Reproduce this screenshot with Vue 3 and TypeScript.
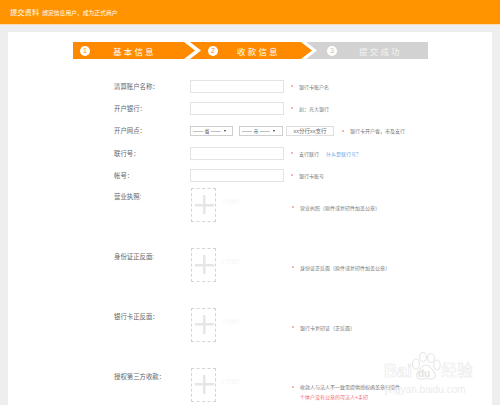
<script setup lang="ts">
interface Step {
  no: number
  label: string
  cls: string
}

interface TextRow {
  label: string
  hint: string
  link?: string
}

interface UploadRow {
  label: string
  hint: string
  extra?: string
}

const steps: Step[] = [
  { no: 1, label: '基本信息', cls: 'first' },
  { no: 2, label: '收款信息', cls: 'second' },
  { no: 3, label: '提交成功', cls: 'third' },
]

const topRows: TextRow[] = [
  { label: '清算账户名称：', hint: '银行卡账户名' },
  { label: '开户银行：', hint: '如：光大银行' },
]

const bottomRows: TextRow[] = [
  { label: '联行号：', hint: '支行联行', link: '什么是联行号？' },
  { label: '帐号：', hint: '银行卡账号' },
]

const uploads: UploadRow[] = [
  { label: '营业执照:', hint: '营业执照（原件或复印件加盖公章）' },
  { label: '身份证正反面:', hint: '身份证正反面（原件或复印件加盖公章）' },
  { label: '银行卡正反面：', hint: '银行卡复印证（正反面）' },
  {
    label: '授权第三方收款：',
    hint: '收款人与法人不一致需提供授权函盖章扫描件',
    extra: '个体户没有公章的可法人+手印',
  },
]
</script>

<template>
  <div class="page">
    <header class="top">
      <span class="top-title">提交资料</span>
      <span class="top-sub">绑定信息用户，成为正式商户</span>
    </header>

    <main class="card">
      <div class="steps">
        <div v-for="s in steps" :key="s.no" class="step" :class="s.cls">
          <span class="num">{{ s.no }}</span>
          <span class="step-label">{{ s.label }}</span>
        </div>
      </div>

      <div class="form">
        <div v-for="r in topRows" :key="r.label" class="row">
          <label class="label">{{ r.label }}</label>
          <div class="input"></div>
          <i class="dot"></i>
          <span class="hint">{{ r.hint }}</span>
        </div>

        <div class="row">
          <label class="label">开户网点：</label>
          <div class="select">—— 省 —— <b class="caret"></b></div>
          <div class="select second-select">—— 市 —— <b class="caret"></b></div>
          <div class="branch">xx分行xx支行</div>
          <i class="dot branch-dot"></i>
          <span class="hint">银行卡开户省，市及支行</span>
        </div>

        <div v-for="r in bottomRows" :key="r.label" class="row">
          <label class="label">{{ r.label }}</label>
          <div class="input"></div>
          <i class="dot"></i>
          <span class="hint">{{ r.hint }}</span>
          <a v-if="r.link" class="link">{{ r.link }}</a>
        </div>

        <div class="uploads">
          <div v-for="u in uploads" :key="u.label" class="upload-row">
            <label class="label upload-label">{{ u.label }}</label>
            <div class="box"><span class="plus"></span></div>
            <span class="ghost">上传图片</span>
            <div class="upload-hint">
              <div class="hint-line">
                <i class="dot"></i>
                <span class="hint">{{ u.hint }}</span>
              </div>
              <div v-if="u.extra" class="extra">{{ u.extra }}</div>
            </div>
          </div>
        </div>
      </div>
    </main>

    <div class="watermark">
      <svg class="paw" viewBox="0 0 30 30" width="30" height="30">
        <g fill="#fff" stroke="#e8e8e8" stroke-width="1.2">
          <ellipse cx="5" cy="12" rx="3.5" ry="5" />
          <ellipse cx="12" cy="5" rx="3.5" ry="4.5" />
          <ellipse cx="20" cy="6" rx="3.5" ry="4.5" />
          <ellipse cx="26" cy="13" rx="3.2" ry="5" />
          <path d="M15 13c-4 0-5 4-8 7-3 4 0 8 4 7 3-1 5-1 8 0 4 1 7-3 4-7-3-3-4-7-8-7z" />
        </g>
      </svg>
      <div class="wm-main">
        <span class="wm-bai">Bai</span>
        <span class="wm-du">du</span>
        <span class="wm-jy">经验</span>
      </div>
      <div class="wm-url">jingyan.baidu.com</div>
    </div>
  </div>
</template>

<style scoped>
.page {
  position: relative;
  width: 500px;
  height: 405px;
  overflow: hidden;
  background: #eeeeee;
  font-family: "Liberation Sans", "Noto Sans CJK SC", sans-serif;
}

.top {
  display: flex;
  align-items: center;
  height: 24px;
  padding-left: 10px;
  background: #ff9400;
  border-bottom: 1px solid #f8dcb4;
  color: #fff;
}

.top-title {
  font-size: 7.3px;
  margin-right: 3px;
}

.top-sub {
  font-size: 5.8px;
}

.card {
  height: 373px;
  margin: 7px 8px 0;
  padding-top: 10px;
  background: #fff;
  box-sizing: border-box;
}

.steps {
  display: flex;
  height: 17px;
  margin-left: 65px;
}

.step {
  display: flex;
  align-items: center;
  width: 122px;
  height: 17px;
  color: #fff;
  background: #ff8a00;
}

.step + .step {
  margin-left: -5px;
}

.first {
  clip-path: polygon(0 0, 111px 0, 100% 50%, 111px 100%, 0 100%);
}

.second {
  clip-path: polygon(0 0, 111px 0, 100% 50%, 111px 100%, 0 100%, 11px 50%);
}

.step.third {
  margin-left: -6px;
  background: #d2d2d2;
  color: #f4f4f4;
  clip-path: polygon(0 0, 100% 0, 100% 100%, 0 100%, 11px 50%);
}

.num {
  display: flex;
  align-items: center;
  justify-content: center;
  width: 10px;
  height: 10px;
  border-radius: 50%;
  background: #fff;
  color: #ff8a00;
  font-size: 7px;
  flex-shrink: 0;
}

.first .num {
  margin-left: 7px;
}

.second .num {
  margin-left: 18px;
}

.third .num {
  margin-left: 21px;
  color: #c4c4c4;
}

.step-label {
  font-size: 8.5px;
  letter-spacing: 2.2px;
  white-space: nowrap;
}

.first .step-label {
  margin-left: 23px;
}

.second .step-label {
  margin-left: 19px;
}

.third .step-label {
  margin-left: 22px;
}

.form {
  margin-top: 16px;
  padding-left: 106px;
}

.row {
  display: flex;
  align-items: center;
  height: 22.3px;
}

.label {
  width: 76px;
  flex-shrink: 0;
  font-size: 6.4px;
  color: #666;
  white-space: nowrap;
}

.input {
  width: 92px;
  height: 11px;
  margin-right: 7px;
  border: 1px solid #e3e3e3;
  flex-shrink: 0;
}

.dot {
  display: block;
  width: 2px;
  height: 2px;
  margin-right: 6px;
  border-radius: 50%;
  background: #f59a9a;
  flex-shrink: 0;
}

.hint {
  font-size: 5px;
  color: #777;
  white-space: nowrap;
}

.link {
  margin-left: 7px;
  font-size: 5px;
  color: #6aa9e8;
  white-space: nowrap;
}

.select {
  display: flex;
  align-items: center;
  width: 43px;
  height: 10px;
  padding-left: 2px;
  border: 1px solid #cfcfcf;
  box-sizing: border-box;
  font-size: 5px;
  color: #555;
  white-space: nowrap;
  flex-shrink: 0;
}

.second-select {
  margin-left: 6px;
  width: 44px;
}

.caret {
  width: 0;
  height: 0;
  margin-left: 3px;
  border-left: 1.5px solid transparent;
  border-right: 1.5px solid transparent;
  border-top: 2.5px solid #333;
}

.branch {
  width: 48px;
  height: 10px;
  margin-left: 3px;
  margin-right: 8px;
  border: 1px solid #dedede;
  box-sizing: border-box;
  font-size: 5.5px;
  line-height: 8px;
  text-align: center;
  color: #666;
  flex-shrink: 0;
}

.uploads {
  margin-top: 2px;
}

.upload-row {
  display: flex;
  align-items: flex-start;
  height: 59.8px;
}

.upload-label {
  margin-top: 4px;
}

.box {
  position: relative;
  width: 25px;
  height: 34px;
  margin-left: 1px;
  border: 1px dashed #d4d4d4;
  box-sizing: border-box;
  flex-shrink: 0;
}

.plus {
  position: absolute;
  left: 2.5px;
  top: 6px;
  width: 19px;
  height: 19px;
  background:
    linear-gradient(#e6e6e6, #e6e6e6) center / 19px 2.5px no-repeat,
    linear-gradient(#e6e6e6, #e6e6e6) center / 2.5px 19px no-repeat;
}

.ghost {
  width: 76px;
  margin-top: 9px;
  padding-left: 5px;
  box-sizing: border-box;
  font-size: 5px;
  color: #f6f6f6;
  flex-shrink: 0;
}

.upload-hint {
  margin-top: 16px;
}

.hint-line {
  display: flex;
  align-items: center;
  height: 6px;
}

.extra {
  margin-top: 3px;
  margin-left: 8px;
  font-size: 5px;
  color: #f2686d;
  white-space: nowrap;
}

/* watermark sits over the page */
.watermark {
  position: absolute;
  left: 384px;
  top: 352px;
  width: 92px;
  height: 44px;
  pointer-events: none;
}

.paw {
  position: absolute;
  left: 27px;
  top: 0;
}

.wm-main {
  position: absolute;
  left: 0;
  top: 9px;
  width: 92px;
  height: 21px;
  color: #fff;
  -webkit-text-stroke: 0.6px #e6e6e6;
  font-weight: 700;
  white-space: nowrap;
}

.wm-bai {
  position: absolute;
  left: 0;
  top: 0;
  font-size: 18px;
  line-height: 20px;
}

.wm-du {
  position: absolute;
  left: 34px;
  top: 6px;
  font-size: 10px;
  line-height: 14px;
  -webkit-text-stroke: 0;
  color: #e2e2e2;
}

.wm-jy {
  position: absolute;
  left: 57px;
  top: 0;
  font-size: 16px;
  line-height: 20px;
  font-weight: 400;
  -webkit-text-stroke: 0.4px #e6e6e6;
}

.wm-url {
  position: absolute;
  left: 1px;
  top: 32px;
  font-size: 10px;
  line-height: 11px;
  color: #ececec;
  white-space: nowrap;
}
</style>

<style>
html,
body {
  margin: 0;
  background: #eeeeee;
}
</style>
